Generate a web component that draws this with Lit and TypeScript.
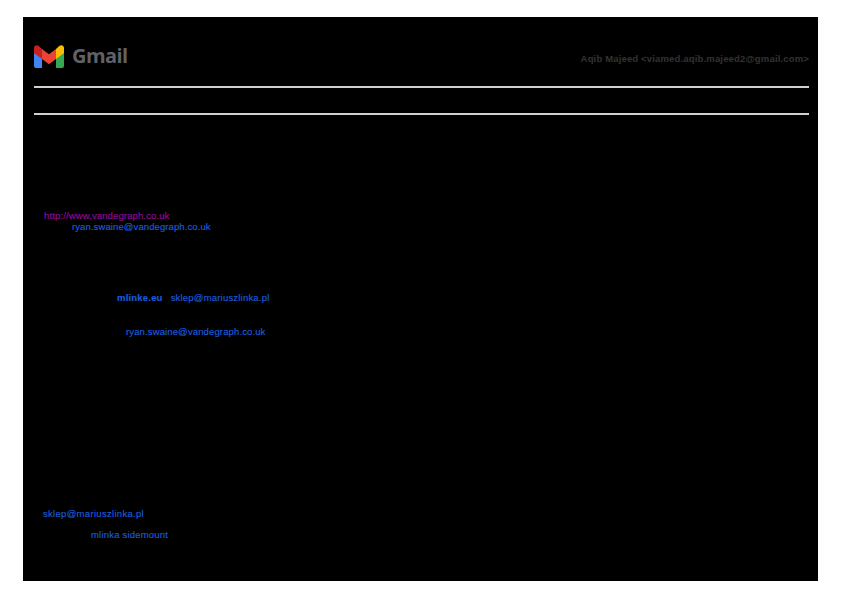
import { LitElement, html, css } from "lit";
import { customElement } from "lit/decorators.js";

@customElement("app-root")
export class AppRoot extends LitElement {
  static styles = css`
    :host { display: block; width: 842px; height: 595px; background: #fff; overflow: hidden; font-family: "Liberation Sans", Arial, sans-serif; }
    .page { box-sizing: border-box; margin: 17px 0 0 23px; width: 795px; height: 564px; background: #000; padding: 0 9px 0 11px; display: flex; flex-direction: column; }
    .header { height: 70px; display: flex; align-items: center; justify-content: space-between; padding-top: 10px; box-sizing: border-box; }
    .brand { display: flex; align-items: center; gap: 8px; margin-top: -2px; }
    .word { font-family: "Open Sans", sans-serif; font-size: 20px; font-weight: 700; color: #5f6368; line-height: 26px; letter-spacing: -0.6px; }
    .who { font-size: 9.5px; font-weight: 700; color: #333; letter-spacing: 0.16px; line-height: 12px; margin-top: 3px; }
    .rule { height: 2px; background: #d0d0d0; margin-top: -1px; margin-bottom: 1px; }
    .gap { height: 25px; }
    .line { font-size: 9.5px; line-height: 11px; height: 11px; color: #1a5cdc; letter-spacing: 0.1px; white-space: nowrap; -webkit-text-stroke: 0.15px currentColor; }
    .visited { color: #900a9a; margin: 94px 0 0 10px; letter-spacing: 0.13px; }
    .a2 { margin-left: 38px; }
    .a3 { margin: 60px 0 0 83px; display: flex; gap: 8px; letter-spacing: 0.2px; }
    .a3 b { font-weight: 700; }
    .a4 { margin: 23px 0 0 92px; letter-spacing: 0.13px; }
    .a5 { margin: 171px 0 0 9px; letter-spacing: 0.3px; }
    .a6 { margin: 10px 0 0 57px; letter-spacing: 0.2px; }
  `;

  render() {
    return html`<div class="page">
      <div class="header">
        <div class="brand">
          <svg width="30" height="23" viewBox="0 0 30 23" aria-hidden="true">
            <path fill="#4285f4" d="M0 6v15a2 2 0 0 0 2 2h6V11z"/>
            <path fill="#34a853" d="M22 11v12h6a2 2 0 0 0 2-2V6z"/>
            <path fill="#c5221f" d="M0 3v5l8 6V4L4.500.8C2.500-.7 0 .5 0 3z"/>
            <path fill="#ea4335" d="M8 14V4l7 5.200L22 4v10l-7 5.200z"/>
            <path fill="#fbbc04" d="M22 4v10l8-6V3c0-2.500-2.500-3.700-4.500-2.200z"/>
          </svg>
          <span class="word">Gmail</span>
        </div>
        <span class="who">Aqib Majeed &lt;viamed.aqib.majeed2@gmail.com&gt;</span>
      </div>
      <div class="rule"></div>
      <div class="gap"></div>
      <div class="rule"></div>
      <div class="line visited">http://www.vandegraph.co.uk</div>
      <div class="line a2">ryan.swaine@vandegraph.co.uk</div>
      <div class="line a3"><b>mlinke.eu</b><span>sklep@mariuszlinka.pl</span></div>
      <div class="line a4">ryan.swaine@vandegraph.co.uk</div>
      <div class="line a5">sklep@mariuszlinka.pl</div>
      <div class="line a6">mlinka sidemount</div>
    </div>`;
  }
}
